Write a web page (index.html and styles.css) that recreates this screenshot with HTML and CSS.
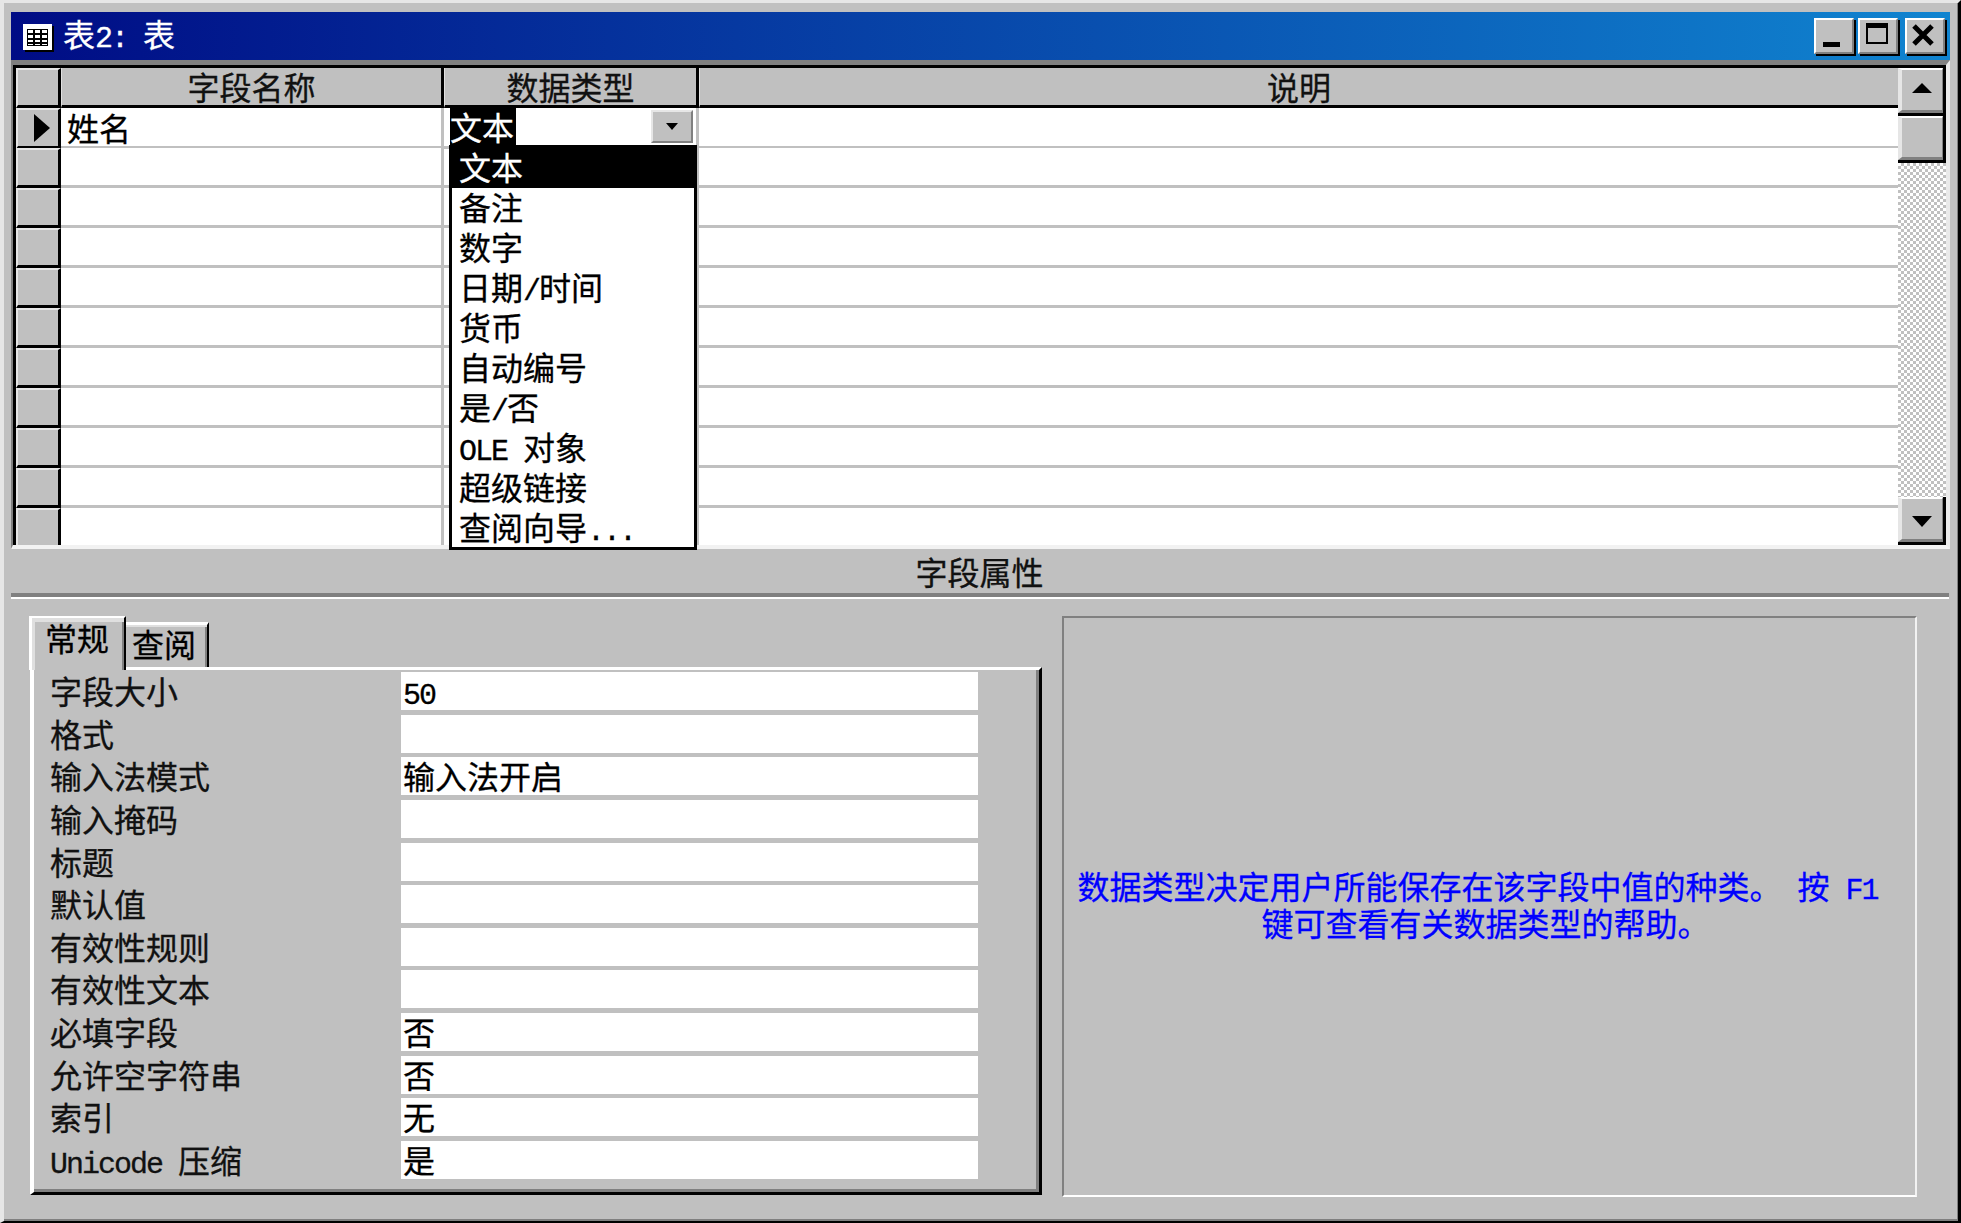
FILE: index.html
```html
<!DOCTYPE html>
<html lang="zh-CN">
<head>
<meta charset="utf-8">
<title>表2: 表</title>
<link rel="stylesheet" href="styles.css">
</head>
<body>
<div class="window">
  <header class="titlebar">
    <svg class="title-icon" width="31" height="28" viewBox="0 0 31 28">
      <rect x="2" y="2" width="29" height="26" fill="#000"/>
      <rect x="0" y="0" width="29" height="26" fill="#fff"/>
      <rect x="4" y="5" width="21" height="17" fill="#000"/>
      <path d="M5 6h5v3H5zM12 6h5v3h-5zM19 6h5v3h-5zM5 11h5v3H5zM12 11h5v3h-5zM19 11h5v3h-5zM5 16h5v2H5zM12 16h5v2h-5zM19 16h5v2h-5zM5 20h5v1H5zM12 20h5v1h-5zM19 20h5v1h-5z" fill="#fff"/>
    </svg>
    <div class="title-text">表<span class="lat">2: </span>表</div>
    <div class="title-buttons">
      <button class="win-btn"><svg width="34" height="30" viewBox="0 0 34 30"><rect x="7" y="21" width="17" height="5" fill="#000"/></svg></button>
      <button class="win-btn"><svg width="34" height="30" viewBox="0 0 34 30"><path d="M7 6h20v16H7z" fill="none" stroke="#000" stroke-width="2"/><rect x="6" y="2" width="22" height="4"/></svg></button>
      <button class="win-btn win-close"><svg width="34" height="30" viewBox="0 0 34 30"><path d="M7 5l18 18M25 5L7 23" fill="none" stroke="#000" stroke-width="5"/></svg></button>
    </div>
  </header>

  <section class="design-grid">
    <div class="table">
      <div class="row head">
        <div class="sel"></div>
        <div class="hcell">字段名称</div>
        <div class="hcell">数据类型</div>
        <div class="hcell">说明</div>
      </div>
      <div class="row">
        <div class="sel"><svg width="18" height="30" viewBox="0 0 18 30"><polygon points="1,1 17,15 1,29" fill="#000"/></svg></div>
        <div class="cell name">姓名</div>
        <div class="cell type">
          <span class="selected">文本</span>
          <span class="combo-btn"><svg width="14" height="8" viewBox="0 0 14 8"><polygon points="1,0 13,0 7,7" fill="#000"/></svg></span>
          <ul class="menu">
            <li class="active">文本</li>
            <li>备注</li>
            <li>数字</li>
            <li>日期<span class="lat">/</span>时间</li>
            <li>货币</li>
            <li>自动编号</li>
            <li>是<span class="lat">/</span>否</li>
            <li><span class="lat">OLE </span>对象</li>
            <li>超级链接</li>
            <li>查阅向导<span class="lat">...</span></li>
          </ul>
        </div>
        <div class="cell"></div>
      </div>
      <div class="row"><div class="sel"></div><div class="cell"></div><div class="cell"></div><div class="cell"></div></div>
      <div class="row"><div class="sel"></div><div class="cell"></div><div class="cell"></div><div class="cell"></div></div>
      <div class="row"><div class="sel"></div><div class="cell"></div><div class="cell"></div><div class="cell"></div></div>
      <div class="row"><div class="sel"></div><div class="cell"></div><div class="cell"></div><div class="cell"></div></div>
      <div class="row"><div class="sel"></div><div class="cell"></div><div class="cell"></div><div class="cell"></div></div>
      <div class="row"><div class="sel"></div><div class="cell"></div><div class="cell"></div><div class="cell"></div></div>
      <div class="row"><div class="sel"></div><div class="cell"></div><div class="cell"></div><div class="cell"></div></div>
      <div class="row"><div class="sel"></div><div class="cell"></div><div class="cell"></div><div class="cell"></div></div>
      <div class="row"><div class="sel"></div><div class="cell"></div><div class="cell"></div><div class="cell"></div></div>
      <div class="row last"><div class="sel"></div><div class="cell"></div><div class="cell"></div><div class="cell"></div></div>
    </div>
    <div class="scrollbar">
      <div class="sb-btn sb-up"><svg width="20" height="10" viewBox="0 0 20 10"><polygon points="10,0 20,10 0,10" fill="#000"/></svg></div>
      <div class="sb-btn sb-thumb"></div>
      <div class="sb-track"></div>
      <div class="sb-btn sb-down"><svg width="20" height="11" viewBox="0 0 20 11"><polygon points="0,0 20,0 10,11" fill="#000"/></svg></div>
    </div>
  </section>

  <div class="section-label">字段属性</div>
  <div class="divider"></div>

  <section class="lower">
    <div class="props">
      <div class="tabs">
        <div class="tab tab-active">常规</div>
        <div class="tab tab-idle">查阅</div>
      </div>
      <div class="panel">
        <div class="prow"><div class="plabel">字段大小</div><div class="pfield"><span class="lat">50</span></div></div>
        <div class="prow"><div class="plabel">格式</div><div class="pfield"></div></div>
        <div class="prow"><div class="plabel">输入法模式</div><div class="pfield">输入法开启</div></div>
        <div class="prow"><div class="plabel">输入掩码</div><div class="pfield"></div></div>
        <div class="prow"><div class="plabel">标题</div><div class="pfield"></div></div>
        <div class="prow"><div class="plabel">默认值</div><div class="pfield"></div></div>
        <div class="prow"><div class="plabel">有效性规则</div><div class="pfield"></div></div>
        <div class="prow"><div class="plabel">有效性文本</div><div class="pfield"></div></div>
        <div class="prow"><div class="plabel">必填字段</div><div class="pfield">否</div></div>
        <div class="prow"><div class="plabel">允许空字符串</div><div class="pfield">否</div></div>
        <div class="prow"><div class="plabel">索引</div><div class="pfield">无</div></div>
        <div class="prow"><div class="plabel"><span class="lat">Unicode </span>压缩</div><div class="pfield">是</div></div>
      </div>
    </div>
    <div class="help">
      <p class="help-text">数据类型决定用户所能保存在该字段中值的种类。<span class="lat"> </span>按<span class="lat"> F1 </span><br>键可查看有关数据类型的帮助。</p>
    </div>
  </section>
</div>
</body>
</html>
```

FILE: styles.css
```css
* { box-sizing: border-box; }
html, body { margin: 0; padding: 0; background: #c0c0c0; }
body {
  font-family: "Noto Sans CJK SC", "Liberation Sans", sans-serif;
  font-size: 32px;
  color: #000;
  -webkit-text-stroke: 0.3px currentColor;
}

.lat {
  font-family: "Liberation Mono", monospace;
  font-size: 30px;
  letter-spacing: -2px;
  line-height: 0;
  white-space: pre;
}

.window {
  width: 1961px;
  height: 1223px;
  display: flex;
  flex-direction: column;
  background: #c0c0c0;
  border-style: solid;
  border-width: 3px 3px 2px 4px;
  border-color: #e6e6e6 #000 #000 #e6e6e6;
  padding: 9px 8px 2px 7px;
  box-shadow: inset -1px -2px 0 #808080;
  position: relative;
  overflow: hidden;
}

.titlebar {
  height: 48px;
  flex: none;
  display: flex;
  align-items: center;
  padding-left: 12px;
  background: linear-gradient(90deg, #000c85, #1084d0);
  color: #fff;
}
.title-icon { flex: none; margin-top: 3px; }
.title-text { margin-left: 9px; line-height: 43px; height: 48px; }
.title-buttons { margin-left: auto; display: flex; gap: 4px; padding-right: 5px; }
.win-btn {
  width: 40px;
  height: 36px;
  padding: 0;
  display: block;
  background: #c0c0c0;
  border: 2px solid;
  border-color: #fff #808080 #808080 #fff;
  box-shadow: 2px 2px 0 #000;
}
.win-btn svg { display: block; }
.win-close { margin-left: 3px; }

.design-grid {
  flex: none;
  height: 489px;
  display: flex;
  border-style: solid;
  border-width: 5px 4px 4px 2px;
  border-color: #808080 #eaeaea #f2f2f2 #808080;
  background: #fff;
}
.table {
  width: 1885px;
  flex: none;
  border-top: 3px solid #000;
  border-left: 3px solid #000;
  position: relative;
}
.row {
  display: grid;
  grid-template-columns: 45px 383px 255px 1199px;
  height: 40px;
}
.row.head { background: #c0c0c0; }
.row.last { height: 37px; }

.sel {
  background: #c0c0c0;
  border-top: 2px solid #e6e6e6;
  border-left: 2px solid #e6e6e6;
  border-right: 3px solid #000;
  border-bottom: 3px solid #000;
  display: flex;
  align-items: center;
  padding-left: 15px;
}
.row.last .sel { border-bottom: 0; }
.hcell {
  background: #c0c0c0;
  text-align: center;
  line-height: 37px;
  border-left: 1px solid #e0e0e0;
  border-right: 3px solid #000;
  border-bottom: 3px solid #000;
  color: #111;
}
.hcell:last-child { border-right: 0; }
.cell {
  background: #fff;
  border-right: 3px solid #c0c0c0;
  border-bottom: 3px solid #c0c0c0;
  line-height: 37px;
}
.cell:last-child { border-right: 0; }
.row.last .cell { border-bottom: 0; }
.cell.name { padding-left: 6px; line-height: 38px; }

.cell.type { position: relative; padding-left: 6px; }
.selected {
  display: inline-block;
  background: #000;
  color: #fff;
  height: 37px;
  line-height: 37px;
  padding-right: 2px;
}
.combo-btn {
  position: absolute;
  left: 207px;
  top: 2px;
  width: 42px;
  height: 33px;
  background: #c0c0c0;
  border: 2px solid;
  border-color: #e6e6e6 #808080 #808080 #e6e6e6;
  display: flex;
  align-items: center;
  justify-content: center;
}
.menu {
  list-style: none;
  margin: 0;
  padding: 0;
  position: absolute;
  z-index: 2;
  left: 5px;
  top: 37px;
  width: 248px;
  height: 405px;
  background: #fff;
  border: 3px solid #000;
}
.menu li { height: 40px; line-height: 36px; padding-left: 7px; }
.menu li.active { background: #000; color: #fff; }

.scrollbar {
  width: 48px;
  flex: none;
  display: flex;
  flex-direction: column;
  background: #000;
}
.sb-btn {
  background: #c0c0c0;
  flex: none;
  border-style: solid;
  border-width: 2px 1px 3px 4px;
  border-color: #fff #808080 #808080 #e6e6e6;
  display: flex;
  align-items: center;
  justify-content: center;
  margin-right: 3px;
}
.sb-up { height: 45px; margin-top: 3px; padding-bottom: 4px; }
.sb-thumb { height: 44px; margin-top: 3px; }
.sb-track {
  flex: 1;
  margin-top: 3px;
  background-color: #fff;
  background-image: conic-gradient(#c0c0c0 25%, #fff 0 50%, #c0c0c0 0 75%, #fff 0);
  background-size: 6px 6px;
}
.sb-down { height: 45px; margin-bottom: 3px; padding-top: 5px; }

.section-label {
  flex: none;
  height: 44px;
  line-height: 44px;
  text-align: center;
  padding-right: 2px;
  color: #111;
}
.divider {
  flex: none;
  height: 6px;
  border-top: 4px solid #808080;
  border-bottom: 2px solid #fff;
  margin-right: 1px;
}

.lower {
  flex: 1;
  display: flex;
  padding: 17px 33px 0 19px;
  gap: 20px;
  min-height: 0;
}
.props { width: 1012px; flex: none; display: flex; flex-direction: column; height: 579px; }
.tabs { display: flex; align-items: flex-end; height: 51px; flex: none; position: relative; z-index: 1; }
.tab { background: #c0c0c0; }
.tab-active {
  width: 97px;
  height: 54px;
  margin-bottom: -3px;
  margin-left: -1px;
  border-top: 2px solid #fff;
  border-left: 3px solid #fff;
  border-right: 2px solid #000;
  box-shadow: inset 3px 4px 0 #dfdfdf, inset -2px 0 0 #808080;
  line-height: 38px;
  padding-left: 13px;
}
.tab-idle {
  width: 83px;
  height: 45px;
  border-top: 3px solid #fff;
  border-right: 2px solid #000;
  box-shadow: inset 0 2px 0 #dfdfdf, inset -2px 0 0 #808080;
  line-height: 36px;
  padding-left: 6px;
}
.panel {
  flex: 1;
  display: grid;
  grid-auto-rows: 38px;
  row-gap: 4.64px;
  align-content: start;
  padding: 2px 0 0 0;
  border-style: solid;
  border-width: 3px 3px 3px 4px;
  border-color: #fff #000 #000 #fff;
  box-shadow: inset -3px -3px 0 #808080;
}
.prow { display: grid; grid-template-columns: 367px 577px; grid-template-rows: 38px; }
.plabel { padding-left: 16px; line-height: 37px; color: #111; white-space: nowrap; }
.pfield { background: #fff; line-height: 37px; padding-left: 2px; }

.help {
  width: 855px;
  height: 581px;
  flex: none;
  border-style: solid;
  border-width: 2px;
  border-color: #808080 #f2f2f2 #fff #808080;
  display: flex;
  align-items: center;
  justify-content: center;
  padding-right: 8px;
  padding-bottom: 6px;
}
.help-text { margin: 0; color: #0000ff; text-align: center; line-height: 37px; white-space: nowrap; }
```
